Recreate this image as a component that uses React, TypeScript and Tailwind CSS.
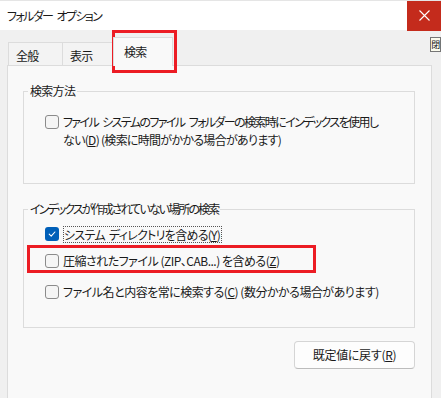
import React from 'react';

const font = { fontFamily: '"Noto Sans CJK JP", "Noto Sans", sans-serif' };

function Sp() {
  return <span className="inline-block w-[4px]" />;
}

function Box({ checked = false }: { checked?: boolean }) {
  if (checked) {
    return (
      <span className="flex w-[14px] h-[14px] shrink-0 rounded-[3px] bg-[#005fb8] items-center justify-center">
        <svg width="10" height="10" viewBox="0 0 10 10" fill="none">
          <path d="M2.2 5.2 L4.2 7.1 L7.9 3" stroke="#fff" strokeWidth="1.1" strokeLinecap="round" strokeLinejoin="round" />
        </svg>
      </span>
    );
  }
  return <span className="block w-[14px] h-[14px] shrink-0 rounded-[3px] border border-[#8b8b8b] bg-[#f5f5f5]" />;
}

function Group({ title, className, legendClass = '', children }: { title: string; className: string; legendClass?: string; children: React.ReactNode }) {
  return (
    <fieldset className={`border border-[#dcdcdc] ${className}`}>
      <legend className={`ml-[4px] px-[2px] text-[12px] leading-[16px] text-[#1a1a1a] ${legendClass}`}>{title}</legend>
      {children}
    </fieldset>
  );
}

export default function App() {
  return (
    <div
      className="relative w-[441px] h-[398px] overflow-hidden bg-[#f0f0f0] text-[#1a1a1a] tracking-[-0.7px] [font-feature-settings:'palt']"
      style={font}
    >
      {/* title bar */}
      <div className="h-[30px] bg-white flex items-center border-t border-[#e5e5e5]">
        <span className="pl-[7px] text-[12px] tracking-[-1.6px]">フォルダー<Sp />オプション</span>
        <div className="ml-auto w-[34px] h-[30px] bg-[#c42b1c] flex items-center justify-center">
          <svg width="11" height="11" viewBox="0 0 11 11">
            <path d="M0.5 0.5 L10.5 10.5 M10.5 0.5 L0.5 10.5" stroke="#fff" strokeWidth="1.1" />
          </svg>
        </div>
      </div>

      {/* tabs */}
      <div className="h-[35px] flex items-end pl-[8px]">
        <div className="w-[54px] h-[23px] border-t border-l border-[#dcdcdc] bg-[#f3f3f3] text-[12px] pl-[7px] pt-[4px]">全般</div>
        <div className="w-[51px] h-[23px] border-t border-l border-[#dcdcdc] bg-[#f3f3f3] text-[12px] pl-[7px] pt-[4px]">表示</div>
        <div className="w-[60px] h-[29px] border-t border-x border-[#dcdcdc] bg-[#f9f9f9] text-[12px] pl-[10px] pt-[5px] -mb-px relative z-10">検索</div>
      </div>

      {/* panel */}
      <div className="ml-[7px] w-[425px] h-[340px] border border-[#dcdcdc] bg-[#f9f9f9] pl-[15px] pt-[17px] text-[12px]">
        <Group title="検索方法" className="w-[392px] h-[101px]">
          <div className="flex items-start gap-[4px] pl-[21px] pt-[15px]">
            <span className="flex mt-[1px]"><Box /></span>
            <span className="leading-[18px] -mt-[1px] whitespace-nowrap">
              <span className="tracking-[-1.6px]">ファイル<Sp />システムのファイル<Sp />フォルダーの検索時にインデックスを使用し</span>
              <br />
              ない(<span className="underline">D</span>) (検索に時間がかかる場合があります)
            </span>
          </div>
        </Group>

        <Group title="インデックスが作成されていない場所の検索" legendClass="tracking-[-1.9px]" className="mt-[17px] w-[392px] h-[127px]">
          <div className="pl-[21px] pt-[8px]">
            <div className="flex items-center gap-[4px] h-[18px]">
              <Box checked />
              <span className="border border-dotted border-[#555] leading-[15px] pr-[1px]">
                システム<Sp />ディレクトリを含める(<span className="underline">Y</span>)
              </span>
            </div>
            <div className="flex items-center gap-[4px] h-[18px] mt-[9px]">
              <Box />
              <span className="leading-[16px] tracking-[-0.5px]">
                圧縮されたファイル (ZIP、CAB...) を含める(<span className="underline">Z</span>)
              </span>
            </div>
            <div className="flex items-center gap-[4px] h-[18px] mt-[13px]">
              <Box />
              <span className="leading-[16px] tracking-[-0.5px]">
                ファイル名と内容を常に検索する(<span className="underline">C</span>) (数分かかる場合があります)
              </span>
            </div>
          </div>
        </Group>

        <div className="flex justify-end w-[392px] mt-[13px]">
          <button className="w-[121px] h-[28px] rounded-[4px] bg-[#fdfdfd] border border-[#d5d5d5] border-b-[#bcbcbc] text-[12px] tracking-[-0.3px]">
            既定値に戻す(<span className="underline">R</span>)
          </button>
        </div>
      </div>

      {/* red annotation frames */}
      <div className="absolute left-[112px] top-[30px] w-[65px] h-[43px] border-[3px] border-[#ec1c24]" />
      <div className="absolute left-[27px] top-[245px] w-[289px] h-[28px] border-[3px] border-[#ec1c24]" />

      {/* tooltip peeking */}
      <div className="absolute left-[430px] top-[37px] w-[11px] h-[15px] border border-[#767676] bg-[#fbfbee] text-[9px] leading-[13px] flex justify-center">
        閉
      </div>
    </div>
  );
}
